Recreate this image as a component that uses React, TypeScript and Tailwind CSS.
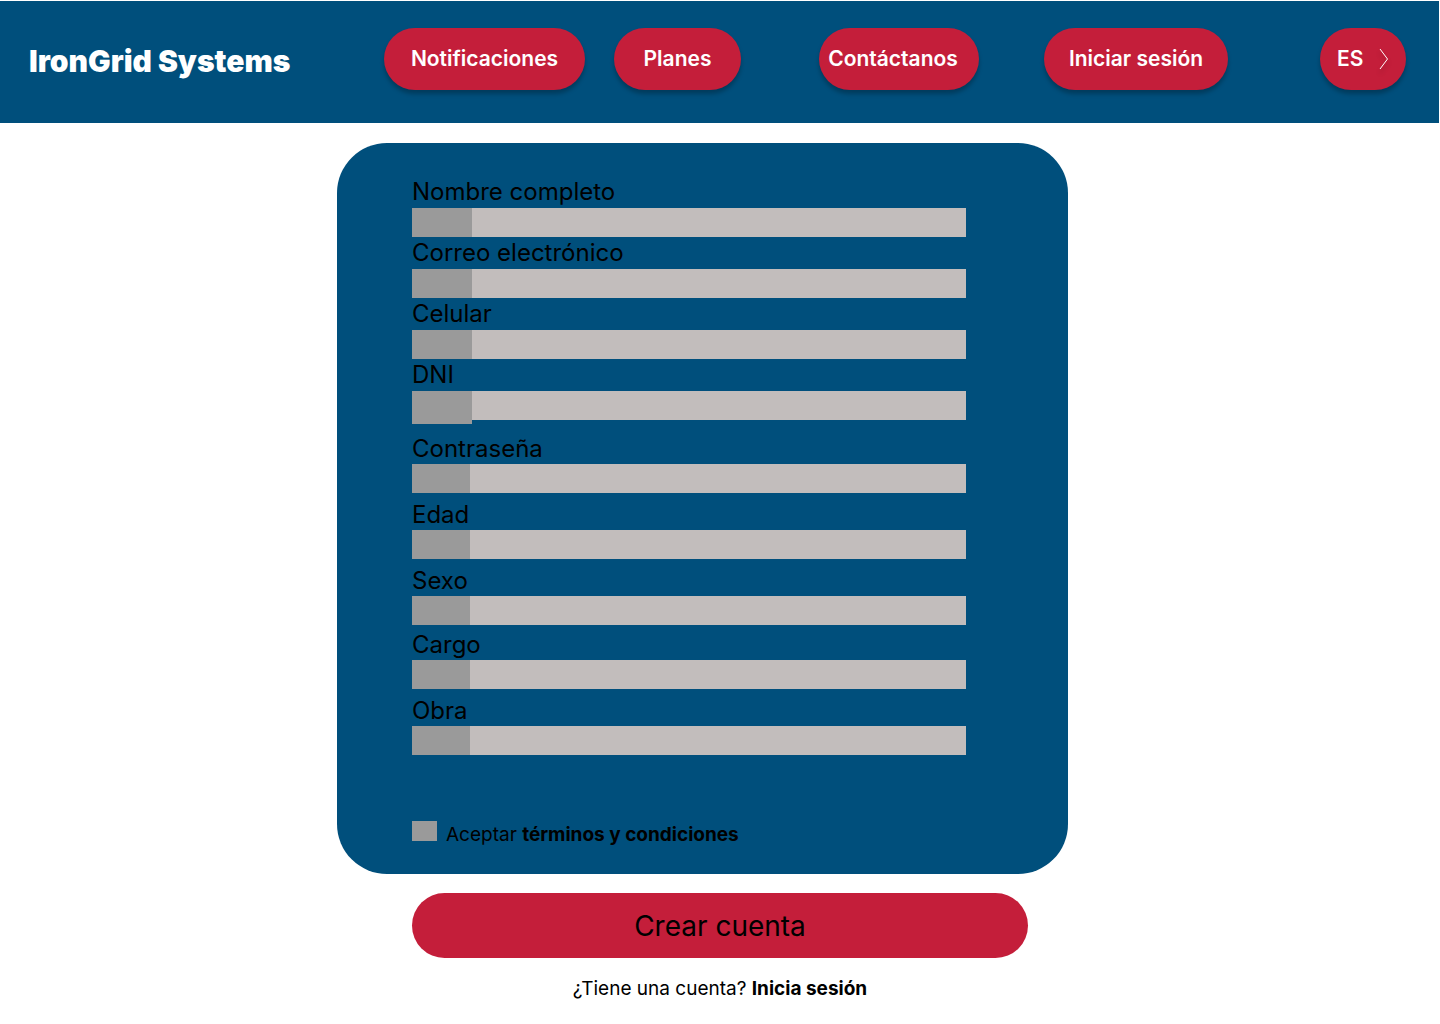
import { useId, useState } from "react";

type FieldProps = {
  label: string;
  type?: string;
  tag?: string;
  leading?: string;
};

const contactTag = "h-[29px] w-15";
const profile = { tag: "h-[29px] w-[58px]", leading: "leading-[30px]" };

function Field({
  label,
  type = "text",
  tag = contactTag,
  leading = "leading-8",
}: FieldProps) {
  const id = useId();
  return (
    <div>
      <label htmlFor={id} className={`block text-[24px] ${leading}`}>
        {label}
      </label>
      <div className="flex h-[29px] bg-[#c2bdbc]">
        <span className={`shrink-0 bg-[#9a9a9a] ${tag}`} aria-hidden="true" />
        <input
          id={id}
          type={type}
          className="h-full min-w-0 flex-1 bg-transparent px-2 text-base outline-none"
        />
      </div>
    </div>
  );
}

const pill =
  "h-[62px] shrink-0 rounded-full bg-[#c41e3a] text-center text-[21px] font-semibold leading-[62px] text-white shadow-[0_4px_4px_rgba(0,0,0,0.25)]";

function Header() {
  return (
    <header className="mt-px mr-px flex h-[122px] items-start bg-[#004f7c] pt-[27px] pr-[33px] pl-[29px]">
      <a
        href="#inicio"
        className="w-[355px] shrink-0 pt-3 text-[30px] leading-[42px] font-black whitespace-nowrap text-white"
      >
        IronGrid Systems
      </a>
      <nav className="flex flex-1 items-start whitespace-nowrap">
        <a href="#notificaciones" className={`w-[201px] ${pill}`}>
          Notificaciones
        </a>
        <a href="#planes" className={`ml-[29px] w-[127px] ${pill}`}>
          Planes
        </a>
        <a href="#contactanos" className={`ml-[78px] w-40 pr-3 ${pill}`}>
          Contáctanos
        </a>
        <a href="#iniciar-sesion" className={`ml-[65px] w-[184px] ${pill}`}>
          Iniciar sesión
        </a>
        <button
          type="button"
          className={`ml-auto flex w-[86px] items-center justify-between px-[17px] ${pill}`}
        >
          ES
          <svg
            width="10"
            height="22"
            viewBox="0 0 10 22"
            fill="none"
            stroke="white"
            aria-hidden="true"
            className="drop-shadow-[0_4px_2px_rgba(0,0,0,0.25)]"
          >
            <path d="M1 1 L8.5 11 L1 21" />
          </svg>
        </button>
      </nav>
    </header>
  );
}

export default function App() {
  const [accepted, setAccepted] = useState(false);

  return (
    <div className="min-h-screen bg-white font-[Inter,sans-serif] text-black">
      <Header />
      <main>
        <form
          className="flex flex-col items-center"
          onSubmit={(event) => event.preventDefault()}
        >
          <div className="mt-5 mr-[35px] w-full max-w-[731px] rounded-[50px] bg-[#004f7c] pt-[33px] pr-[102px] pb-7 pl-[75px]">
            <div className="flex flex-col">
              <Field label="Nombre completo" />
              <Field label="Correo electrónico" type="email" />
              <Field label="Celular" type="tel" />
              <Field label="DNI" tag="h-[33px] w-15" />
            </div>
            <div className="mt-[14px] flex flex-col gap-[7px]">
              <Field label="Contraseña" type="password" {...profile} />
              <Field label="Edad" {...profile} />
              <Field label="Sexo" {...profile} />
            </div>
            <div className="mt-[5px] flex flex-col gap-[7px]">
              <Field label="Cargo" {...profile} />
              <Field label="Obra" {...profile} />
            </div>
            <div className="mt-[66px] flex h-[25px] items-start gap-[9px]">
              <input
                id="terminos"
                type="checkbox"
                checked={accepted}
                onChange={(event) => setAccepted(event.target.checked)}
                className="h-5 w-[25px] appearance-none bg-[#9a9a9a] checked:bg-[#c41e3a]"
              />
              <label htmlFor="terminos" className="text-[19px] leading-[28px]">
                Aceptar <a href="#terminos" className="font-bold">términos y condiciones</a>
              </label>
            </div>
          </div>
          <button
            type="submit"
            className="mt-[19px] h-[65px] w-full max-w-[616px] rounded-full bg-[#c41e3a] text-[28px]"
          >
            Crear cuenta
          </button>
        </form>
        <p className="mt-[17px] text-center text-[19px] leading-[28px]">
          ¿Tiene una cuenta?{" "}
          <a href="#iniciar-sesion" className="font-bold">
            Inicia sesión
          </a>
        </p>
      </main>
    </div>
  );
}
